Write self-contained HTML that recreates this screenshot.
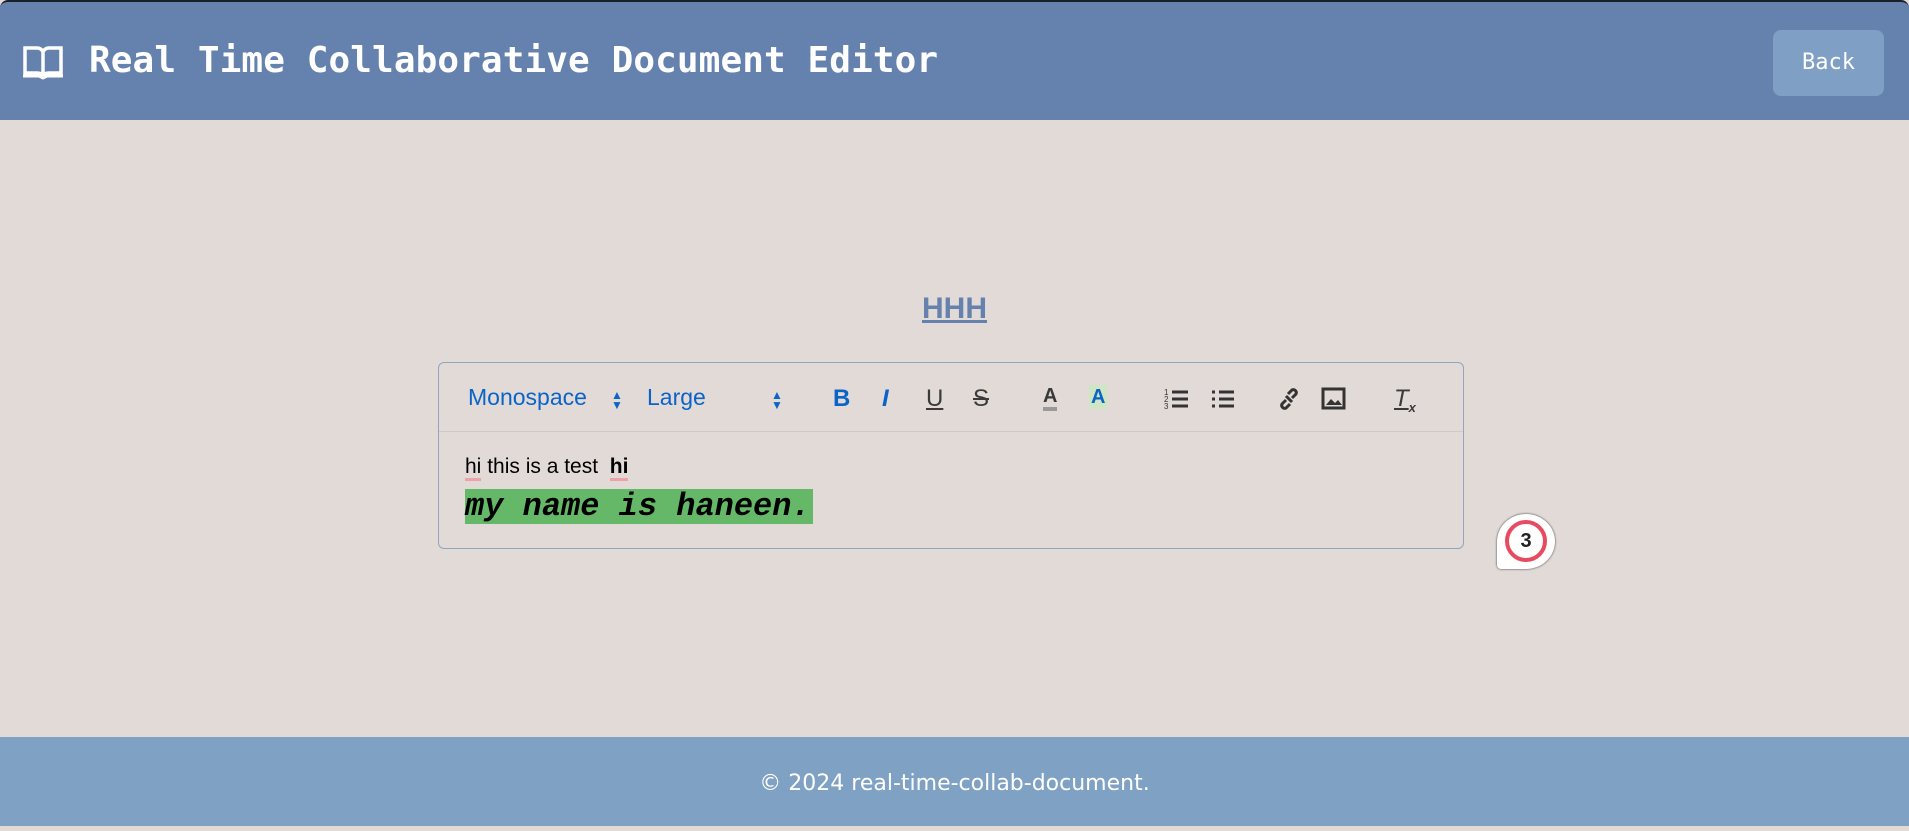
<!DOCTYPE html>
<html><head><meta charset="utf-8"><style>
*{margin:0;padding:0;box-sizing:border-box}
body{width:1909px;height:826px;background:#e2dad7;position:relative;overflow:hidden;font-family:"Liberation Sans",sans-serif}
.hdr{position:absolute;left:0;top:0;width:1909px;height:120px;background:#6582ae;border-top:2px solid #1a1f2b;border-radius:8px 8px 0 0}
.title{position:absolute;left:89px;top:38px;font:bold 36px "DejaVu Sans Mono","Liberation Mono",monospace;color:#fff;letter-spacing:0.1px}
.book{position:absolute;left:22px;top:42px}
.back{position:absolute;left:1773px;top:28px;width:111px;height:66px;background:#7fa0c4;border-radius:8px;color:#fff;font:22px "DejaVu Sans Mono",monospace;line-height:66px;text-align:center}
.hhh{position:absolute;left:0;width:1909px;top:292px;text-align:center;font:bold 30px "Liberation Sans",sans-serif;color:#6582ae;text-decoration:underline}
.ed{position:absolute;left:438px;top:362px;width:1026px;height:187px;border:1px solid #8fa6c2;border-radius:6px}
.tb{position:absolute;left:0;top:0;width:100%;height:69px;border-bottom:1px solid #cfc9c7}
.t{position:absolute;top:21px;font-size:23px;color:#0b63c8}
.ar{position:absolute;font-size:12px;color:#0b63c8;line-height:10px}
.ic{position:absolute;top:22px;font-weight:bold;font-size:24px;color:#0b63c8}
.g{color:#3a3a3a}
.l1{position:absolute;left:26px;top:92px;font-size:21px;color:#000}
.l1 u{text-decoration:none;border-bottom:3px solid #f0a0a8}
.l2{position:absolute;left:26px;top:126px;height:35px;width:348px;background:#64b867;font:italic bold 32px "Liberation Mono",monospace;line-height:35px;color:#000}
.badge{position:absolute;left:1497px;top:514px;width:58px;height:55px;background:#fff;border-radius:50% 50% 50% 4px;box-shadow:0 0 2px #333}
.badge div{position:absolute;left:8px;top:6px;width:42px;height:42px;border:4px solid #e84a5f;border-radius:50%;text-align:center;font:bold 20px "Liberation Sans",sans-serif;line-height:34px;color:#222}
.ftr{position:absolute;left:0;top:737px;width:1909px;height:89px;background:#7fa1c4;color:#fff;text-align:center;font:22px "DejaVu Sans","Liberation Sans",sans-serif;line-height:94px}
</style></head><body>
<div class="hdr">
<svg class="book" width="42" height="36" viewBox="0 0 42 36"><path d="M3 4h12c3 0 6 2 6 5v23c0-2-3-3-6-3H3z M39 4H27c-3 0-6 2-6 5v23c0-2 3-3 6-3h12z" fill="none" stroke="#fff" stroke-width="3.5"/><path d="M1 32h16l4 2 4-2h16" stroke="#fff" stroke-width="3" fill="none"/></svg>
<div class="title">Real Time Collaborative Document Editor</div>
<div class="back">Back</div>
</div>
<div class="hhh">HHH</div>
<div class="ed">
<div class="tb">
<span class="t" style="left:29px">Monospace</span>
<span class="ar" style="left:172px;top:27px">▲<br>▼</span>
<span class="t" style="left:208px">Large</span>
<span class="ar" style="left:332px;top:27px">▲<br>▼</span>
<span class="ic" style="left:394px">B</span>
<span class="ic" style="left:443px;font-style:italic">I</span>
<span class="ic g" style="left:487px;text-decoration:underline;font-weight:normal">U</span>
<span class="ic g" style="left:534px;text-decoration:line-through;font-weight:normal">S</span>
<span class="ic g" style="left:604px;font-size:20px;border-bottom:4px solid #999;line-height:22px">A</span>
<span class="ic" style="left:650px;font-size:20px;background:#cfe6c4;line-height:24px;padding:0 2px">A</span>
<svg style="position:absolute;left:725px;top:24px" width="26" height="24"><text x="0" y="8" font-size="8" fill="#333">1</text><text x="0" y="15" font-size="8" fill="#333">2</text><text x="0" y="22" font-size="8" fill="#333">3</text><path d="M8 5h16M8 12h16M8 19h16" stroke="#333" stroke-width="3"/></svg>
<svg style="position:absolute;left:771px;top:24px" width="26" height="24"><path d="M2 5h3M2 12h3M2 19h3M9 5h15M9 12h15M9 19h15" stroke="#333" stroke-width="3"/></svg>
<svg style="position:absolute;left:837px;top:23px" width="26" height="26"><path d="M10 14l-4 4a3 3 0 0 0 4 4l4-4M16 12l4-4a3 3 0 0 0-4-4l-4 4M10 10l6 6" stroke="#333" stroke-width="3" fill="none"/></svg>
<svg style="position:absolute;left:882px;top:24px" width="26" height="24"><rect x="2" y="2" width="21" height="19" fill="none" stroke="#333" stroke-width="3"/><path d="M5 18l5-6 4 4 3-3 4 5z" fill="#333"/></svg>
<span class="ic g" style="left:955px;font-style:italic;font-weight:normal;text-decoration:underline">T<sub style="font-size:13px;font-weight:bold">x</sub></span>
</div>
<div class="l1"><u>hi</u> this is a test &nbsp;<u><b>hi</b></u></div>
<div class="l2">my name is haneen.</div>
</div>
<div class="badge"><div>3</div></div>
<div class="ftr">© 2024 real-time-collab-document.</div>
</body></html>
